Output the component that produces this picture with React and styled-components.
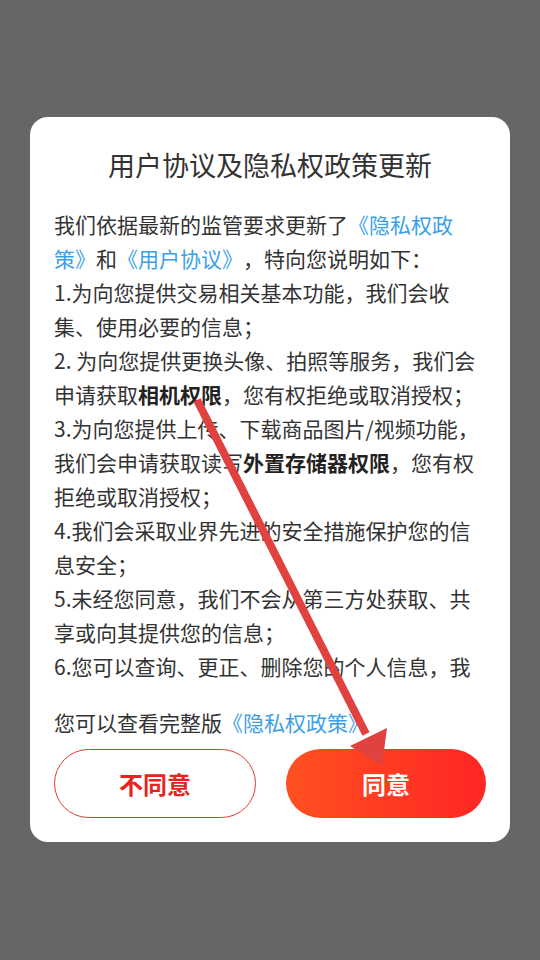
import styled, { createGlobalStyle } from "styled-components"

const Global = createGlobalStyle`
html, body {
  margin: 0;
  padding: 0;
  background: #666666;
}
body {
  font-family: "Noto Sans CJK SC", "Noto Sans", sans-serif;
  text-spacing-trim: space-all;
}
`

const Screen = styled.div`
position: relative;
width: 540px;
height: 960px;
background: #666666;
display: flex;
justify-content: center;
padding-top: 117px;
box-sizing: border-box;
`

const Dialog = styled.div`
width: 480px;
height: 725px;
background: #fff;
border-radius: 18px;
box-sizing: border-box;
padding: 30px 24px 24px;
display: flex;
flex-direction: column;
`

const Title = styled.h1`
margin: 0;
font-size: 27px;
line-height: 36px;
font-weight: 400;
color: #333;
text-align: center;
`

const Body = styled.div`
margin-top: 24px;
height: 476px;
overflow: hidden;
font-size: 21px;
line-height: 34px;
color: #333;
`

const Para = styled.p`
margin: 0;
`

const Link = styled.span`
color: #3b9fe8;
`

const Strong = styled.b`
font-weight: 700;
color: #222;
`

const Footer = styled.p`
margin: 22px 0 0;
font-size: 21px;
line-height: 34px;
color: #333;
white-space: nowrap;
`

const Buttons = styled.div`
display: flex;
gap: 30px;
margin-top: 10px;
`

const Button = styled.button`
flex: 1;
height: 69px;
border-radius: 35px;
font-family: inherit;
font-size: 24px;
font-weight: 700;
cursor: pointer;
border: ${p => p.$primary ? "none" : "1px solid #e53935"};
color: ${p => p.$primary ? "#fff" : "#e8231f"};
background: ${p => p.$primary ? "linear-gradient(90deg, #ff5020, #ff2624)" : "#fff"};
`

const Arrow = styled.svg`
position: absolute;
left: 0;
top: 0;
pointer-events: none;
`

export default function App() {
  return (
    <Screen lang="zh-CN">
      <Global />
      <Dialog>
        <Title>用户协议及隐私权政策更新</Title>
        <Body>
          <Para>我们依据最新的监管要求更新了<Link>《隐私权政<wbr />策》</Link>和<Link>《用户协议》</Link>，特向您说明如下：</Para>
          <Para>1.为向您提供交易相关基本功能，我们会收集、使用必要的信息；</Para>
          <Para>2. 为向您提供更换头像、拍照等服务，我们会申请获取<Strong>相机权限</Strong>，您有权拒绝或取消授权；</Para>
          <Para>3.为向您提供上传、下载商品图片/视频功能，我们会申请获取读写<Strong>外置存储器权限</Strong>，您有权拒绝或取消授权；</Para>
          <Para>4.我们会采取业界先进的安全措施保护您的信息安全；</Para>
          <Para>5.未经您同意，我们不会从第三方处获取、共享或向其提供您的信息；</Para>
          <Para>6.您可以查询、更正、删除您的个人信息，我们也提供账户注销的渠道。</Para>
        </Body>
        <Footer>您可以查看完整版<Link>《隐私权政策》</Link></Footer>
        <Buttons>
          <Button>不同意</Button>
          <Button $primary>同意</Button>
        </Buttons>
      </Dialog>
      <Arrow width="540" height="960" viewBox="0 0 540 960">
        <line x1="197" y1="400" x2="366" y2="734" stroke="#e0423f" strokeWidth="8" />
        <polygon points="387,728 382,766 350,746" fill="#e0423f" />
      </Arrow>
    </Screen>
  )
}
